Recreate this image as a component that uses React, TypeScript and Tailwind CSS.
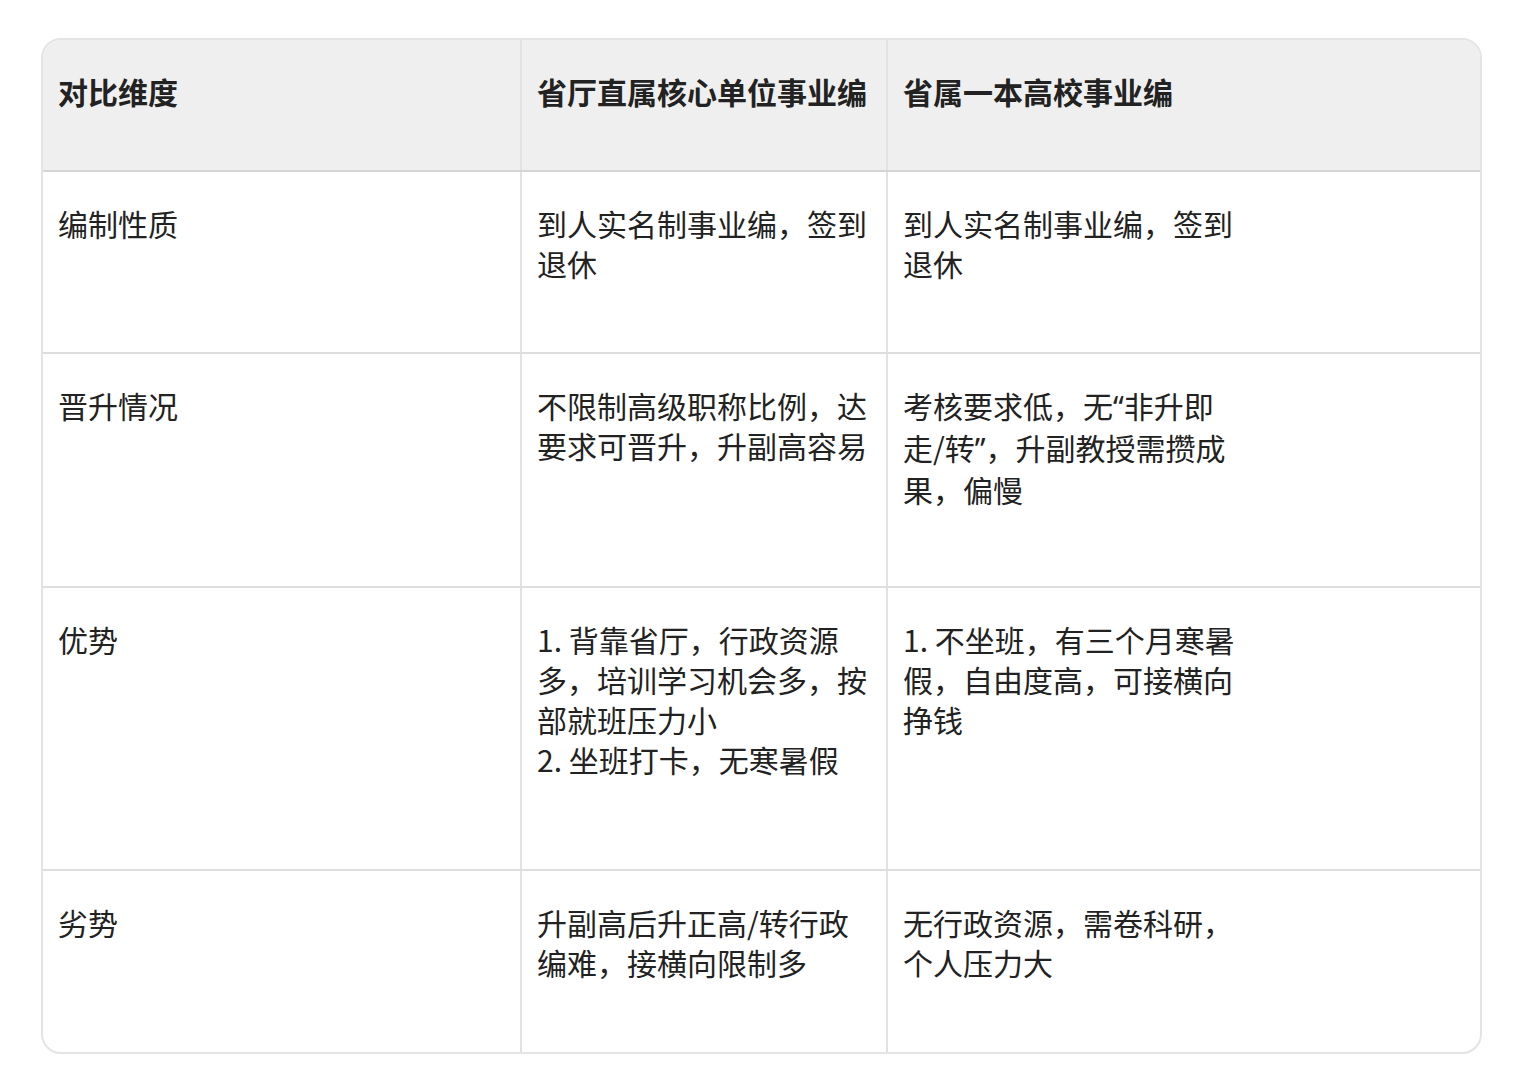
const font = { fontFamily: '"Noto Sans CJK SC", "Noto Sans", sans-serif' }

const header = ["对比维度", "省厅直属核心单位事业编", "省属一本高校事业编"]

const rows: { h: string; cells: string[][] }[] = [
  {
    h: "h-[182px]",
    cells: [["编制性质"], ["到人实名制事业编，签到", "退休"], ["到人实名制事业编，签到", "退休"]],
  },
  {
    h: "h-[234px]",
    cells: [
      ["晋升情况"],
      ["不限制高级职称比例，达", "要求可晋升，升副高容易"],
      ["考核要求低，无“非升即", "走/转”，升副教授需攒成", "果，偏慢"],
    ],
  },
  {
    h: "h-[283px]",
    cells: [
      ["优势"],
      ["1. 背靠省厅，行政资源", "多，培训学习机会多，按", "部就班压力小", "2. 坐班打卡，无寒暑假"],
      ["1. 不坐班，有三个月寒暑", "假，自由度高，可接横向", "挣钱"],
    ],
  },
  {
    h: "h-[181px]",
    cells: [
      ["劣势"],
      ["升副高后升正高/转行政", "编难，接横向限制多"],
      ["无行政资源，需卷科研，", "个人压力大"],
    ],
  },
]

const cols = ["w-[477px]", "w-[366px] border-l-2 border-[#e2e2e2]", "flex-1 border-l-2 border-[#e2e2e2]"]

// latin curly quotes stay narrow like in the screenshot
function Line({ text }: { text: string }) {
  const parts = text.split(/([“”])/)
  return (
    <div className="whitespace-nowrap">
      {parts.map((p, i) =>
        p === "“" || p === "”" ? (
          <span key={i} style={{ fontFamily: '"Noto Sans", sans-serif' }}>
            {p}
          </span>
        ) : (
          p
        ),
      )}
    </div>
  )
}

export default function App() {
  return (
    <div className="min-h-[1080px] bg-white pl-[41px] pt-[38px]" style={font}>
      <div className="w-[1441px] overflow-hidden rounded-[20px] border-2 border-[#e4e4e4] text-[30px] leading-[40px] text-[#222]">
        <div className="flex h-[132px] border-b-2 border-[#d4d4d4] bg-[#efefef] font-bold">
          {header.map((t, i) => (
            <div key={t} className={`${cols[i]} px-[15px] pt-[31px]`}>
              {t}
            </div>
          ))}
        </div>
        {rows.map((r, ri) => (
          <div key={ri} className={`flex ${r.h} ${ri < rows.length - 1 ? "border-b-2 border-[#dedede]" : ""}`}>
            {r.cells.map((lines, i) => (
              <div key={i} className={`${cols[i]} px-[15px] pt-[31px]`}>
                {lines.map((l) => (
                  <Line key={l} text={l} />
                ))}
              </div>
            ))}
          </div>
        ))}
      </div>
    </div>
  )
}
